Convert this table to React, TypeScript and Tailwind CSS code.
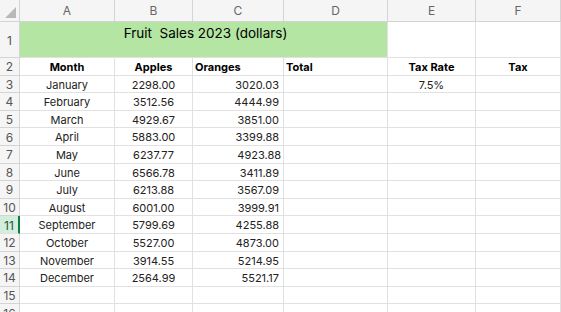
const months = [
  ['January', '2298.00', '3020.03'],
  ['February', '3512.56', '4444.99'],
  ['March', '4929.67', '3851.00'],
  ['April', '5883.00', '3399.88'],
  ['May', '6237.77', '4923.88'],
  ['June', '6566.78', '3411.89'],
  ['July', '6213.88', '3567.09'],
  ['August', '6001.00', '3999.91'],
  ['September', '5799.69', '4255.88'],
  ['October', '5527.00', '4873.00'],
  ['November', '3914.55', '5214.95'],
  ['December', '2564.99', '5521.17'],
];

const cell = 'border-r border-b border-[#e1e1e1] flex items-center pt-[2px] overflow-hidden whitespace-nowrap';

function RowHead({ n, active }: { n: number; active?: boolean }) {
  if (active) {
    return (
      <div className="bg-[#d3eedc] border-b border-[#e1e1e1] border-r-2 border-r-[#107c41] flex items-center justify-center pt-[2px] text-[12px] text-[#1e5a38]">
        {n}
      </div>
    );
  }
  return (
    <div className="bg-[#f5f5f5] border-r border-b border-[#d4d4d4] flex items-center justify-center pt-[2px] text-[12px] text-[#555]">
      {n}
    </div>
  );
}

export default function App() {
  return (
    <div className="w-[561px] h-[312px] overflow-hidden bg-white text-[11px] text-[#222]" style={{ fontFamily: 'Inter, "Noto Sans", sans-serif' }}>
      <div className="grid grid-cols-[20px_95px_78px_91px_104px_88px_85px] grid-rows-[22px_36px_repeat(15,17.6px)]">
        {/* column header row */}
        <div className="bg-[#f5f5f5] border-r border-b border-[#d4d4d4] relative">
          <div className="absolute right-[3px] bottom-[3px] w-0 h-0 border-l-[11px] border-l-transparent border-b-[11px] border-b-[#b9b9b9]" />
        </div>
        {['A', 'B', 'C', 'D', 'E', 'F'].map((c) => (
          <div key={c} className="bg-[#f5f5f5] border-r border-b border-[#d4d4d4] flex items-center justify-center text-[12px] text-[#666]">
            {c}
          </div>
        ))}

        {/* row 1 */}
        <RowHead n={1} />
        <div className="col-span-4 bg-[#b4e5a2] border-r border-b border-[#e1e1e1] flex items-start justify-center pt-[1px] pl-[4px] text-[13.5px] text-black whitespace-pre">
          Fruit  Sales 2023 (dollars)
        </div>
        <div className={cell} />
        <div className={cell} />

        {/* row 2 */}
        <RowHead n={2} />
        <div className={`${cell} justify-center font-bold text-black`}>Month</div>
        <div className={`${cell} justify-center font-bold text-black`}>Apples</div>
        <div className={`${cell} pl-[2px] font-bold text-black`}>Oranges</div>
        <div className={`${cell} pl-[2px] font-bold text-black`}>Total</div>
        <div className={`${cell} justify-center font-bold text-black`}>Tax Rate</div>
        <div className={`${cell} justify-center font-bold text-black`}>Tax</div>

        {months.map(([m, a, o], i) => (
          <>
            <RowHead key={`h${i}`} n={i + 3} active={i + 3 === 11} />
            <div key={`a${i}`} className={`${cell} justify-center`}>{m}</div>
            <div key={`b${i}`} className={`${cell} justify-center`}>{a}</div>
            <div key={`c${i}`} className={`${cell} justify-end ${m === 'May' ? 'pr-[2px]' : 'pr-[4px]'}`}>{o}</div>
            <div key={`d${i}`} className={cell} />
            <div key={`e${i}`} className={`${cell} justify-center`}>{i === 0 ? '7.5%' : ''}</div>
            <div key={`f${i}`} className={cell} />
          </>
        ))}

        {/* rows 15, 16 */}
        {[15, 16].map((n) => (
          <>
            <RowHead key={`h${n}`} n={n} />
            <div key={`a${n}`} className={cell} />
            <div key={`b${n}`} className={cell} />
            <div key={`c${n}`} className={cell} />
            <div key={`d${n}`} className={cell} />
            <div key={`e${n}`} className={cell} />
            <div key={`f${n}`} className={cell} />
          </>
        ))}
      </div>
    </div>
  );
}
